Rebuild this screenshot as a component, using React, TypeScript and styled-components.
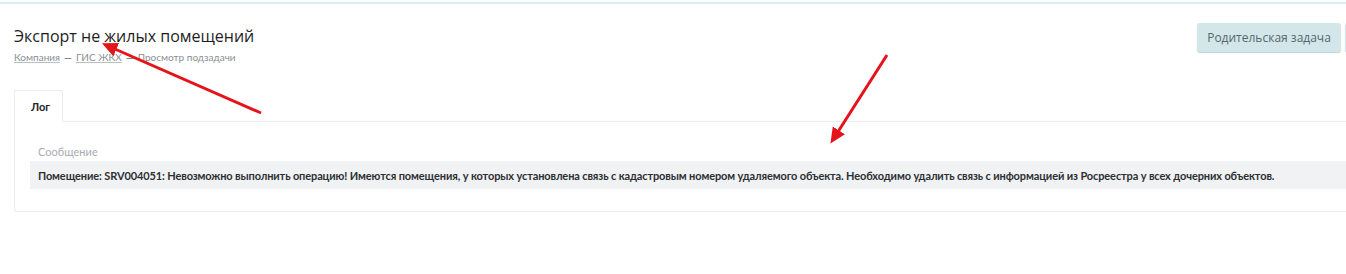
import React from 'react';
import styled, { createGlobalStyle } from 'styled-components';

const GlobalStyle = createGlobalStyle`
	html, body {
		margin: 0;
		padding: 0;
		background: #ffffff;
	}
	body {
		font-family: Lato, 'Open Sans', sans-serif;
		color: #222;
	}
`;

const message =
	'Помещение: SRV004051: Невозможно выполнить операцию! Имеются помещения, у которых установлена связь с кадастровым номером удаляемого объекта. Необходимо удалить связь с информацией из Росреестра у всех дочерних объектов.';

const App: React.FunctionComponent = () => (
	<Page>
		<GlobalStyle />
		<TopLine />
		<Content>
			<HeaderRow>
				<TitleBlock>
					<Title>Экспорт не жилых помещений</Title>
					<Breadcrumbs>
						<Crumb href="#">Компания</Crumb>
						<Dash>—</Dash>
						<Crumb href="#">ГИС ЖКХ</Crumb>
						<Dash>—</Dash>
						<span>Просмотр подзадачи</span>
					</Breadcrumbs>
				</TitleBlock>
				<Actions>
					<ActionButton>Родительская задача</ActionButton>
					<ActionButton>Задача</ActionButton>
				</Actions>
			</HeaderRow>

			<Card>
				<TabBar>
					<Tab $active>Лог</Tab>
					<TabFill />
				</TabBar>
				<TabBody>
					<ColumnHead>Сообщение</ColumnHead>
					<MessageRow>{message}</MessageRow>
				</TabBody>
			</Card>
		</Content>

		{/* red annotation arrows drawn over the screenshot */}
		<Annotations width="1346" height="274" viewBox="0 0 1346 274">
			<defs>
				<marker id="head" markerWidth="6" markerHeight="6" refX="3" refY="3" orient="auto" markerUnits="strokeWidth">
					<path d="M0,0.6 L5.2,3 L0,5.4 Z" fill="#e5141b" />
				</marker>
			</defs>
			<line x1="261" y1="113" x2="108" y2="46" stroke="#e5141b" strokeWidth="3" markerEnd="url(#head)" />
			<line x1="887" y1="55" x2="834" y2="138" stroke="#e5141b" strokeWidth="3" markerEnd="url(#head)" />
		</Annotations>
	</Page>
);

const Page = styled.div`
	position: relative;
	width: 1346px;
	height: 274px;
	overflow: hidden;
	background: #fff;
`;

const TopLine = styled.div`
	height: 2px;
	margin-top: 2px;
	background: #d8eff1;
`;

const Content = styled.div`
	padding: 19px 0 0 14px;
`;

const HeaderRow = styled.div`
	display: flex;
	justify-content: space-between;
	align-items: flex-start;
	width: 1392px;
`;

const TitleBlock = styled.div`
	display: flex;
	flex-direction: column;
	padding-top: 2px;
`;

const Title = styled.h1`
	margin: 0;
	font-family: 'Open Sans', sans-serif;
	font-size: 16px;
	font-weight: 400;
	line-height: 22px;
	color: #1e1e1e;
`;

const Breadcrumbs = styled.div`
	display: flex;
	gap: 4px;
	font-size: 10px;
	line-height: 14px;
	color: #8a8f94;
	margin-top: 3px;
`;

const Crumb = styled.a`
	color: #8a8f94;
	text-decoration: underline;
	text-decoration-color: #b9bec2;
`;

const Dash = styled.span`
	color: #555;
`;

const Actions = styled.div`
	display: flex;
	gap: 4px;
`;

const ActionButton = styled.button`
	height: 29px;
	padding: 0 10px;
	border: 0;
	border-radius: 3px;
	background: #d3e7eb;
	box-shadow: 0 1px 1px rgba(90, 120, 130, 0.35);
	color: #56666c;
	font-family: 'Open Sans', sans-serif;
	font-size: 12px;
	white-space: nowrap;
`;

const Card = styled.div`
	margin-top: 26px;
	width: 1360px;
	border: 1px solid #ececec;
	border-top: 0;
	border-radius: 0 0 4px 4px;
`;

const TabBar = styled.div`
	display: flex;
	height: 32px;
`;

const Tab = styled.div<{ $active?: boolean }>`
	width: 49px;
	box-sizing: border-box;
	margin-left: -1px;
	border: 1px solid #ececec;
	border-bottom: 0;
	border-radius: 3px 3px 0 0;
	padding-left: 16px;
	display: flex;
	align-items: center;
	font-size: 11px;
	font-weight: ${p => (p.$active ? 700 : 400)};
	color: #222;
`;

const TabFill = styled.div`
	flex: 1;
	border-bottom: 1px solid #ececec;
`;

const TabBody = styled.div`
	padding: 21px 0 22px 15px;
`;

const ColumnHead = styled.div`
	padding-left: 8px;
	font-size: 11px;
	line-height: 17px;
	color: #a9acb0;
	margin-bottom: 1px;
`;

const MessageRow = styled.div`
	height: 28px;
	display: flex;
	align-items: center;
	padding-left: 8px;
	background: #f1f2f4;
	font-size: 11px;
	font-weight: 700;
	letter-spacing: -0.12px;
	color: #2c2f33;
	white-space: nowrap;
`;

const Annotations = styled.svg`
	position: absolute;
	left: 0;
	top: 0;
	pointer-events: none;
`;

export default App;
